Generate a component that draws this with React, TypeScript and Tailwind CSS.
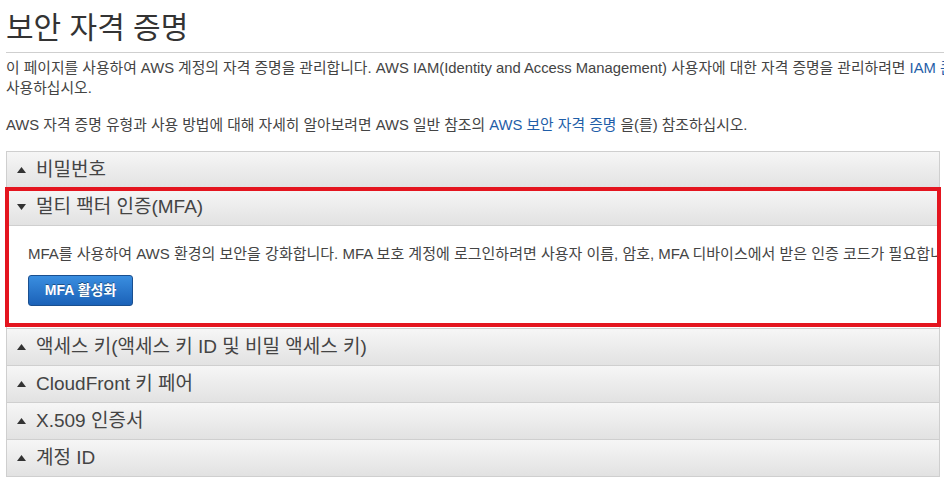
const FONT = "font-['Liberation_Sans','Noto_Sans_CJK_KR',sans-serif]";

type Section = { title: string; open?: boolean };

const sections: Section[] = [
  { title: "비밀번호" },
  { title: "멀티 팩터 인증(MFA)", open: true },
  { title: "액세스 키(액세스 키 ID 및 비밀 액세스 키)" },
  { title: "CloudFront 키 페어" },
  { title: "X.509 인증서" },
  { title: "계정 ID" },
];

function Caret({ up }: { up: boolean }) {
  return (
    <svg width="9" height="6" viewBox="0 0 9 6" className="shrink-0">
      <path d={up ? "M0 6L4.5 0L9 6Z" : "M0 0L4.5 6L9 0Z"} fill="#333" />
    </svg>
  );
}

function Header({ title, open }: Section) {
  return (
    <div className="flex items-center h-[37px] gap-[10px] pl-[10px] border-b border-[#cfcfcf] bg-gradient-to-b from-[#f6f6f6] to-[#e2e2e2] text-[19px] text-[#444] whitespace-nowrap">
      <Caret up={!open} />
      <span>{title}</span>
    </div>
  );
}

export default function App() {
  return (
    <div className={`relative w-[944px] h-[484px] overflow-hidden bg-white text-[#444] ${FONT}`}>
      <div className="pl-[6px]">
        <h1 className="pt-[9px] pb-[5px] text-[30px] leading-[38px] text-[#333] border-b border-[#cfcfcf] whitespace-nowrap">
          보안 자격 증명
        </h1>

        <p className="mt-[5px] text-[14.8px] leading-[20px] whitespace-nowrap">
          이 페이지를 사용하여 AWS 계정의 자격 증명을 관리합니다. AWS IAM(Identity and Access Management) 사용자에 대한 자격 증명을 관리하려면{" "}
          <span className="text-[#1f5ea8]">IAM 콘솔</span>을
          <br />
          사용하십시오.
        </p>

        <p className="mt-[17px] text-[14.8px] leading-[20px] whitespace-nowrap">
          AWS 자격 증명 유형과 사용 방법에 대해 자세히 알아보려면 AWS 일반 참조의{" "}
          <span className="text-[#1f5ea8]">AWS 보안 자격 증명</span> 을(를) 참조하십시오.
        </p>

        <div className="mt-[16px] w-[934px] border border-b-0 border-[#cfcfcf] overflow-hidden">
          {sections.map((s) => (
            <div key={s.title}>
              <Header {...s} />
              {s.open && (
                <div className="bg-white border-b border-[#cfcfcf] pl-[21px] pt-[18px] pb-[22px]">
                  <p className="text-[15px] leading-[20px] whitespace-nowrap">
                    MFA를 사용하여 AWS 환경의 보안을 강화합니다. MFA 보호 계정에 로그인하려면 사용자 이름, 암호, MFA 디바이스에서 받은 인증 코드가 필요합니다.
                  </p>
                  <button className="block mt-[11px] h-[31px] w-[105px] rounded-[3px] border border-[#1a4f8f] bg-gradient-to-b from-[#3a8ee0] to-[#1b62b8] text-white text-[14px] font-bold [text-shadow:0_-1px_0_rgba(0,0,0,0.4)]">
                    MFA 활성화
                  </button>
                </div>
              )}
            </div>
          ))}
        </div>
      </div>

      {/* annotation box */}
      <div className="absolute left-[5px] top-[187px] w-[936px] h-[140px] border-[4px] border-[#e4151f] pointer-events-none" />
    </div>
  );
}
